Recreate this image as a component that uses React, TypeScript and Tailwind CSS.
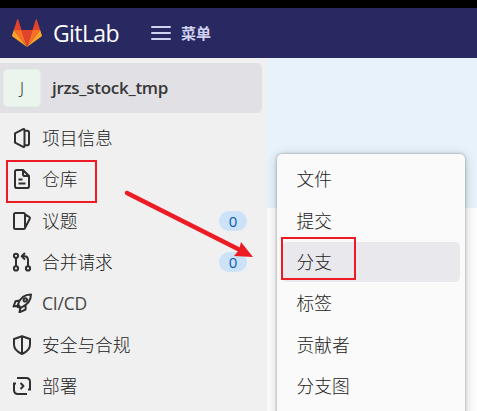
import type { ReactNode } from 'react';

type IconName = 'project' | 'file' | 'issues' | 'merge' | 'rocket' | 'shield' | 'deploy';

const shapes: Record<IconName, ReactNode> = {
  project: (
    <path d="M3 5.300 11.200 1.200q1.300-.5 1.300.8v16q0 1.300-1.300.8L3 14.700V5.300ZM12.500 2.800h2.700q1.800 0 1.800 1.800v10.800q0 1.800-1.800 1.800h-2.700" />
  ),
  file: (
    <path d="M11 1H4.800Q3 1 3 2.800v14.400Q3 19 4.800 19h10.400q1.800 0 1.800-1.800V7L11 1v4.200Q11 7 12.800 7H17M6.500 10.500h4M6.500 14.500h7" />
  ),
  issues: (
    <path d="M3.500 2h8Q13 2 13 3.500v13q0 1.500-1.500 1.500h-8Q2 18 2 16.500v-13Q2 2 3.500 2ZM13 3.500l4.200 2.300q1.200.7.600 1.900L13 17" />
  ),
  merge: (
    <>
      <circle cx="4" cy="3.800" r="2.100" />
      <circle cx="4" cy="16.400" r="2.100" />
      <circle cx="16" cy="16.400" r="2.100" />
      <path d="M4 6v8M16 14V8.300Q16 4.300 12.500 4.300H10.500M13 1 9.700 4.300l3.300 3.300" />
    </>
  ),
  rocket: (
    <>
      <path d="M6 11.500C8 5 12 1.500 19 1.500 19 8 15 12 8.800 14.800ZM7.500 7.500l-4 .8L1.500 13.500l4-.8M13.600 12.500v4L7.500 19.300l.8-4M6 11.500 5.500 14l3.300.8" />
      <circle cx="13.300" cy="6.900" r="1.700" />
    </>
  ),
  shield: <path d="M10 1.200 18 4v5.500c0 4.500-3.300 7.500-8 9.500-4.700-2-8-5-8-9.500V4l8-2.800ZM10 1.200V19" />,
  deploy: (
    <path d="M5 2h9q4 0 4 4v7.500M15 18H6q-4 0-4-4V7.500M8.500 7l3 3-3 3M1 7.500h3M16 13.500h3" />
  ),
};

function Icon({ name }: { name: IconName }) {
  return (
    <svg viewBox="0 0 20 20" className="size-5 shrink-0 fill-none stroke-[#303030] stroke-2" strokeLinejoin="round">
      {shapes[name]}
    </svg>
  );
}

const items: { icon: IconName; label: string; count?: number }[] = [
  { icon: 'project', label: '项目信息' },
  { icon: 'file', label: '仓库' },
  { icon: 'issues', label: '议题', count: 0 },
  { icon: 'merge', label: '合并请求', count: 0 },
  { icon: 'rocket', label: 'CI/CD' },
  { icon: 'shield', label: '安全与合规' },
  { icon: 'deploy', label: '部署' },
];

const submenu = ['文件', '提交', '分支', '标签', '贡献者', '分支图'];

function Logo() {
  return (
    <svg viewBox="0 0 30 28" className="h-7 w-[30px]">
      <path fill="#e24329" d="m15 28 5.500-17h-11Z" />
      <path fill="#fc6d26" d="M15 28 9.500 11H1.800Z" />
      <path fill="#fca326" d="M1.800 11 .1 16.200q-.3.700.4 1.200L15 28Z" />
      <path fill="#e24329" d="M1.800 11h7.700L6.200.6q-.5-.9-1 0Z" />
      <path fill="#fc6d26" d="m15 28 5.500-17h7.700Z" />
      <path fill="#fca326" d="m28.200 11 1.700 5.200q.3.700-.4 1.200L15 28Z" />
      <path fill="#e24329" d="M28.200 11h-7.700L23.800.6q.5-.9 1 0Z" />
    </svg>
  );
}

export default function App() {
  return (
    <div className="relative flex h-[411px] w-[477px] flex-col overflow-hidden bg-[#fdfdfd] font-['Open_Sans','Noto_Sans_CJK_SC',sans-serif] text-[#222]">
      <header className="flex h-[58px] shrink-0 items-center border-t-8 border-black bg-[#292961] pl-3">
        <Logo />
        <span className="ml-[11px] w-[98px] text-[23px] leading-none font-medium tracking-[-0.6px] text-white">GitLab</span>
        <svg viewBox="0 0 20 14" className="h-3.5 w-5 stroke-[#d1d1f0] stroke-2" strokeLinecap="round">
          <path d="M1 1h18M1 7h18M1 13h18" />
        </svg>
        <span className="ml-2.5 text-[15px] font-bold text-[#d1d1f0]">菜单</span>
      </header>
      <div className="flex min-h-0 flex-1">
        <aside className="w-[267px] shrink-0 bg-[#f0f0f0] pt-[5px]">
          <div className="mr-[5px] flex h-[50px] items-center rounded-r-[5px] bg-[#e1e0e5] pl-[3px]">
            <span className="flex size-[38px] items-center justify-center rounded-[4px] border border-[#e1eee5] bg-[#ebf5ed] text-base font-light">J</span>
            <span className="ml-[11px] text-[17px] font-semibold tracking-[-0.28px] text-[#383838]">jrzs_stock_tmp</span>
          </div>
          <nav className="pt-[4.500px]">
            {items.map((item) => (
              <a key={item.label} className="flex h-[41.330px] items-center pr-5 pl-3">
                <Icon name={item.icon} />
                <span className={item.icon === 'rocket' ? 'ml-2.5 flex-1 text-[17.500px] tracking-[-0.200px] text-[#444]' : 'ml-2.5 flex-1 text-[17.700px] font-light'}>
                  {item.label}
                </span>
                {item.count !== undefined && (
                  <span className="flex h-5 w-7 items-center justify-center rounded-full bg-[#cbe2f9] text-[15px] text-[#0b5cad]">
                    {item.count}
                  </span>
                )}
              </a>
            ))}
          </nav>
        </aside>
        <main className="flex-1">
          <div className="h-[150px] bg-[#e7f2fb]" />
        </main>
      </div>
      <div className="absolute top-[154px] left-[277px] h-[270px] w-[188px] rounded-[5px] bg-[#fafafa] pt-[5px] shadow-[0_0_3px_#0005,0_2px_12px_#0003]">
        {submenu.map((label) => (
          <div key={label} className="h-[41.330px] px-[5px]">
            <div className={`flex h-10 items-center rounded-[5px] pt-px pl-[14.500px] text-[17.700px] font-light ${label === '分支' ? 'bg-[#e9e8ed]' : ''}`}>
              {label}
            </div>
          </div>
        ))}
      </div>
      <div className="absolute top-[160px] left-[6px] h-[43px] w-[91px] border-2 border-[#ed1c24]" />
      <div className="absolute top-[237px] left-[281px] h-[43px] w-[75px] border-2 border-[#ed1c24]" />
      <svg viewBox="0 0 140 80" className="absolute top-[185px] left-[120px] h-20 w-[140px]">
        <path d="M7 8 119 64.500" stroke="#ed1c24" strokeWidth="4.500" strokeLinecap="round" />
        <path d="m121 57 12 15-19-1 5-6Z" fill="#ed1c24" />
      </svg>
    </div>
  );
}
